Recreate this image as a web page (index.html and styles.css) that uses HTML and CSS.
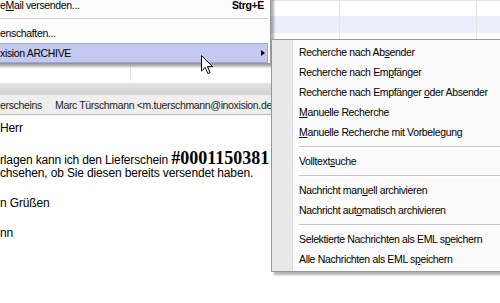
FILE: index.html
```html
<!DOCTYPE html>
<html lang="de">
<head>
<meta charset="utf-8">
<title>inoxision ARCHIVE Kontextmenü</title>
<link rel="stylesheet" href="styles.css">
</head>
<body>
<div class="app">
  <div class="list">
    <div class="row"><span></span><span></span><span></span><span></span></div>
    <div class="row alt"><span></span><span></span><span></span><span></span></div>
    <div class="row"><span></span><span></span><span></span><span></span></div>
    <div class="row"><span></span><span></span><span></span><span></span></div>
    <div class="row last"><span></span><span></span><span></span><span></span></div>
  </div>
  <div class="band"></div>
  <div class="hdr"><span class="c1">erscheins</span><span class="c2">Marc Türschmann &lt;m.tuerschmann@inoxision.de&gt;</span></div>
  <div class="msg">
    <div class="ln">Herr</div>
    <div class="ln"></div>
    <div class="ln">rlagen kann ich den Lieferschein <b class="num">#0001150381</b> nicht finden.</div>
    <div class="ln">chsehen, ob Sie diesen bereits versendet haben.</div>
    <div class="ln"></div>
    <div class="ln">n Grüßen</div>
    <div class="ln"></div>
    <div class="ln">nn</div>
  </div>
</div>

<div class="menu main">
  <div class="item"><span class="lbl">e<u>M</u>ail versenden...</span><span class="key">Strg+E</span></div>
  <div class="sep"></div>
  <div class="item"><span class="lbl">enschaften...</span></div>
  <div class="item hot"><span class="lbl">xision ARCHIVE</span><span class="arrow"></span></div>
</div>

<div class="menu sub">
  <div class="item"><span class="lbl">Recherche nach Ab<u>s</u>ender</span></div>
  <div class="item"><span class="lbl">Recherche nach Em<u>p</u>fänger</span></div>
  <div class="item"><span class="lbl">Recherche nach Empfänger <u>o</u>der Absender</span></div>
  <div class="item"><span class="lbl"><u>M</u>anuelle Recherche</span></div>
  <div class="item"><span class="lbl"><u>M</u>anuelle Recherche mit Vorbelegung</span></div>
  <div class="sep"></div>
  <div class="item"><span class="lbl">Volltext<u>s</u>uche</span></div>
  <div class="sep"></div>
  <div class="item"><span class="lbl">Nachricht man<u>u</u>ell archivieren</span></div>
  <div class="item"><span class="lbl">Nachricht aut<u>o</u>matisch archivieren</span></div>
  <div class="sep"></div>
  <div class="item"><span class="lbl">Selektierte Nachrichten als EML s<u>p</u>eichern</span></div>
  <div class="item"><span class="lbl">Alle Nachrichten als EML s<u>p</u>eichern</span></div>
</div>

<svg class="cursor" width="13" height="20" viewBox="0 0 13 20" xmlns="http://www.w3.org/2000/svg">
  <path d="M0.5 0.5 L0.5 16 L4.2 12.4 L6.8 18.5 L9 17.6 L6.5 11.6 L11.5 11.6 Z" fill="#fff" stroke="#000" stroke-width="1" stroke-linejoin="miter"/>
</svg>
</body>
</html>
```
FILE: styles.css
```css
* { box-sizing: border-box; }
html, body { margin: 0; padding: 0; }
body {
  width: 500px;
  height: 303px;
  overflow: hidden;
  position: relative;
  background: #fff;
  font-family: "Liberation Sans", Arial, sans-serif;
  font-size: 10.5px;
  letter-spacing: -0.35px;
  color: #000;
}

.app { display: flex; flex-direction: column; height: 303px; }

.list { height: 83px; border-top: 1px solid #e4e6ea; }
.row {
  display: grid;
  grid-template-columns: 131px 209px 137px 1fr;
  height: 16px;
  border-bottom: 1px solid #eceef2;
}
.row.alt { background: #eaf0fb; }
.row.last { border-bottom: 0; }
.row span { border-right: 1px solid #e2e2e2; }
.row span:last-child { border-right: 0; }

.band {
  height: 12px;
  background: linear-gradient(#e4e4e4, #d2d2d2);
}

.hdr {
  height: 20px;
  display: flex;
  align-items: center;
  background: #efefef;
  border-bottom: 1px solid #b8b8b8;
  white-space: nowrap;
  overflow: hidden;
  color: #1a1a1a;
}
.hdr .c1 { width: 55px; flex: none; }

.msg {
  padding-top: 6px;
  font-size: 12px;
  letter-spacing: -0.15px;
  white-space: nowrap;
  overflow: hidden;
}
.ln { height: 15px; line-height: 15px; }
.num {
  font-family: "Liberation Serif", "Times New Roman", serif;
  font-size: 18px;
  letter-spacing: 0;
  line-height: 15px;
}

/* menus */
.menu {
  position: absolute;
  background: #fbfbfb;
  border: 1px solid #979797;
  box-shadow: 3px 3px 2px rgba(0, 0, 0, 0.3);
  white-space: nowrap;
}
.menu u { text-decoration: underline; text-underline-offset: 1px; }
.item {
  height: 20px;
  display: flex;
  align-items: center;
}

.main {
  left: -10px;
  top: -6px;
  width: 281px;
  padding: 0 2px 0 0;
  background: #fcfcfc;
}
.main .item { padding-left: 9px; position: relative; }
.main .key {
  margin-left: auto;
  margin-right: 4px;
  font-weight: bold;
}
.main .sep {
  height: 8px;
  margin-left: 9px;
  background: linear-gradient(#c8c8c8 0 1px, #fff 1px 2px) no-repeat 0 3px / 100% 2px;
}
.main .hot {
  background: #c4c9ef;
  border: 1px solid #9ea4d8;
  border-left: 0;
}
.arrow {
  position: absolute;
  right: 2px;
  top: 6px;
  width: 0;
  height: 0;
  border-top: 3.5px solid transparent;
  border-bottom: 3.5px solid transparent;
  border-left: 4px solid #000;
}

.sub {
  left: 271px;
  top: 39px;
  width: 260px;
  padding: 2px 0;
  background:
    linear-gradient(to right, #e9e9e9 0 20px, #dcdcdc 20px 21px, #fff 21px 22px, #fbfbfb 22px);
}
.sub .item { padding-left: 27px; }
.sub .sep {
  height: 9px;
  margin-left: 27px;
  background: linear-gradient(#c5c5c5 0 1px, #fff 1px 2px) no-repeat 0 4px / 100% 2px;
}

.cursor {
  position: absolute;
  left: 201px;
  top: 55px;
}
```
